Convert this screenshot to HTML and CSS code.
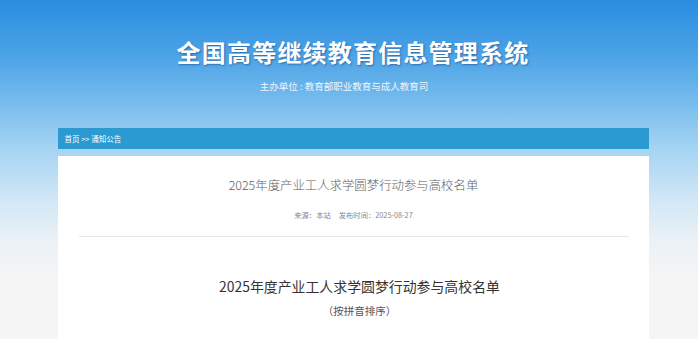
FILE: index.html
```html
<!DOCTYPE html>
<html lang="zh-CN">
<head>
    <meta charset="UTF-8">
    <meta name="viewport" content="width=device-width, initial-scale=1.0">
    <title>全国高等继续教育信息管理系统</title>
    <link rel="stylesheet" href="styles.css">
</head>
<body>
    <div class="page">
        <div class="header">
            <h1 class="site-title">全国高等继续教育信息管理系统</h1>
            <div class="site-sub">主办单位 : 教育部职业教育与成人教育司</div>
        </div>
        <div class="main">
            <div class="crumb"><a href="#">首页</a> &gt;&gt; <a href="#">通知公告</a></div>
            <div class="article">
                <div class="article-head">
                    <h2 class="article-title">2025年度产业工人求学圆梦行动参与高校名单</h2>
                    <div class="article-meta">来源：本站<span class="gap"></span>发布时间：2025-08-27</div>
                </div>
                <div class="article-body">
                    <h3 class="body-title">2025年度产业工人求学圆梦行动参与高校名单</h3>
                    <p class="body-sub">（按拼音排序）</p>
                </div>
            </div>
        </div>
    </div>
</body>
</html>
```

FILE: styles.css
```css
html, body {
    height: 100%;
}
body {
    margin: 0;
    font-family: "Noto Sans CJK SC", "Microsoft YaHei", sans-serif;
    background: linear-gradient(180deg, #2a8de0 0px, #4fa5e7 60px, #7fc0ee 110px, #a6d4f3 150px, #d2e7f6 200px, #ebf1f7 240px, #f5f5f5 280px, #f5f5f5 100%);
    overflow: hidden;
}
.page {
    padding-left: 8px;
}
.header {
    height: 128px;
    box-sizing: border-box;
    padding-top: 37px;
    text-align: center;
}
.site-title {
    margin: 0;
    font-size: 24px;
    line-height: 30px;
    letter-spacing: 1.2px;
    font-weight: bold;
    color: #ffffff;
    text-shadow: 1px 1px 2px rgba(0, 40, 100, 0.45);
}
.site-sub {
    margin-top: 12px;
    padding-right: 18px;
    font-size: 9.5px;
    line-height: 14px;
    color: #f0f6fc;
}
.main {
    width: 591px;
    margin: 0 auto;
}
.crumb {
    height: 21px;
    line-height: 21px;
    padding-left: 7px;
    background: #2a9ad1;
    font-size: 7.5px;
    color: #ffffff;
}
.crumb a {
    color: #ffffff;
    text-decoration: none;
}
.article {
    margin-top: 7px;
    background: #ffffff;
    padding: 0 20px 40px 21px;
    min-height: 300px;
}
.article-head {
    padding-top: 19px;
    padding-bottom: 15px;
    border-bottom: 1px solid #e6e6e6;
    text-align: center;
}
.article-title {
    margin: 0;
    font-size: 12.4px;
    line-height: 20px;
    font-weight: 300;
    color: #5e5e5e;
}
.article-meta {
    margin-top: 14px;
    font-size: 7.3px;
    line-height: 12px;
    color: #888888;
}
.gap {
    display: inline-block;
    width: 8px;
}
.article-body {
    padding-left: 12px;
    text-align: center;
}
.body-title {
    margin: 38px 0 0 0;
    font-size: 13.9px;
    line-height: 22px;
    font-weight: normal;
    color: #333333;
}
.body-sub {
    margin: 7px 0 0 0;
    font-size: 10.5px;
    line-height: 14px;
    color: #555555;
}
```
